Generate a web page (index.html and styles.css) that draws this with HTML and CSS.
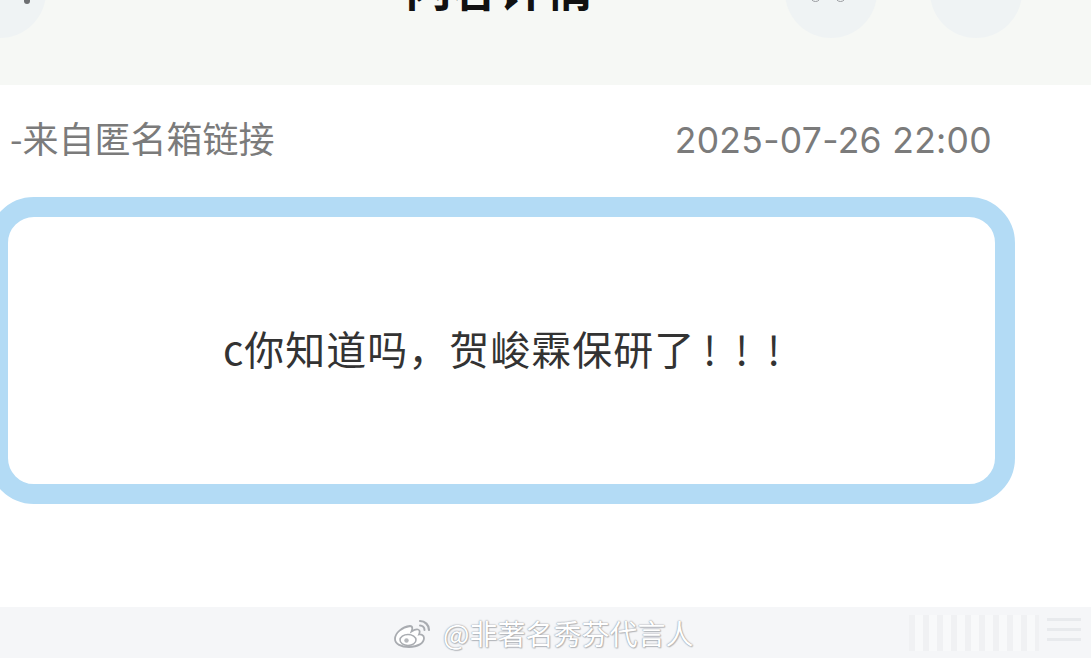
FILE: index.html
```html
<!DOCTYPE html>
<html lang="zh-CN">
<head>
<meta charset="utf-8">
<title>内容详情</title>
<link rel="stylesheet" href="styles.css">
</head>
<body>
<div class="page">
  <header class="header">
    <div class="header-row">
      <div class="circle btn-back"><span class="back-dot"></span></div>
      <h1 class="title">内容详情</h1>
      <div class="circle btn-more">
        <span class="ring"></span><span class="ring"></span>
      </div>
      <div class="circle btn-share"></div>
    </div>
  </header>
  <main class="main">
    <div class="meta">
      <span class="source">-来自匿名箱链接</span>
      <span class="date">2025-07-26 22:00</span>
    </div>
    <div class="message-box">
      <p class="message">c你知道吗，贺峻霖保研了<span class="bang">!!!</span></p>
    </div>
  </main>
  <footer class="footer">
    <div class="watermark">
      <svg class="weibo" width="40" height="30" viewBox="0 0 40 30">
        <path d="M17 8 C9 9 2 15 2 21 C2 26 8 29 16 29 C25 29 31 25 31 20 C31 17 28 16 26 16.5 C27 14 27 12 25 11.5 C23 11 20 12.5 18.5 13.5 C19.5 11 20 8 17 8 Z" fill="#fff" stroke="#a9acb1" stroke-width="1.8"/>
        <ellipse cx="15" cy="22" rx="8" ry="5.5" fill="#fff" stroke="#a9acb1" stroke-width="1.5"/>
        <circle cx="13.5" cy="22.5" r="2.2" fill="#b5b8bc"/>
        <path d="M27 3 C32 3 36 7 36 12" fill="none" stroke="#a9acb1" stroke-width="2.2" stroke-linecap="round"/>
        <path d="M27 7.5 C29.5 7.5 31.5 9.5 31.5 12" fill="none" stroke="#a9acb1" stroke-width="2" stroke-linecap="round"/>
      </svg>
      <span class="wm-text">@非著名秀芬代言人</span>
    </div>
    <div class="blur-bars">
      <span class="bars-v"></span>
      <span class="bars-h"></span>
    </div>
  </footer>
</div>
</body>
</html>
```
FILE: styles.css
```css
html, body {
  margin: 0;
  padding: 0;
}
body {
  background: #ffffff;
  font-family: "Noto Sans CJK SC", "Noto Sans", sans-serif;
}
.page {
  width: 1091px;
  height: 658px;
  overflow: hidden;
  display: flex;
  flex-direction: column;
}
.header {
  height: 85px;
  flex: none;
  background: #f6f8f5;
  overflow: hidden;
}
.header-row {
  display: flex;
  align-items: flex-start;
  margin-top: -54px;
}
.circle {
  width: 92px;
  height: 92px;
  border-radius: 50%;
  background: #eff3f4;
  flex: none;
  position: relative;
}
.btn-back {
  margin-left: -46px;
}
.back-dot {
  position: absolute;
  left: 70px;
  top: 50px;
  width: 6px;
  height: 8px;
  border-radius: 3px;
  background: #6d6f72;
}
.title {
  margin: 16px 0 0 359px;
  font-size: 47px;
  line-height: 47px;
  font-weight: 700;
  color: #111111;
  white-space: nowrap;
}
.btn-more {
  margin-left: 192px;
}
.ring {
  position: absolute;
  top: 45px;
  width: 9px;
  height: 9px;
  border: 1.5px solid #9a9ca0;
  border-radius: 50%;
}
.ring:first-child { left: 25px; }
.ring:last-child { left: 50px; }
.btn-share {
  margin-left: 53px;
}
.main {
  flex: 1;
  padding-top: 33px;
  display: flex;
  flex-direction: column;
}
.meta {
  display: flex;
  justify-content: space-between;
  align-items: baseline;
  padding: 0 99px 0 10px;
  color: #7b7b7b;
}
.source {
  font-size: 36px;
  line-height: 38px;
}
.date {
  font-family: "Inter", "Roboto", sans-serif;
  font-size: 35.5px;
  line-height: 38px;
  letter-spacing: 0.3px;
}
.message-box {
  margin: 37px 0 0 -12px;
  width: 1027px;
  height: 307px;
  box-sizing: border-box;
  border: 20px solid #b3dbf5;
  border-radius: 46px;
  display: flex;
  align-items: center;
  justify-content: center;
}
.message {
  margin: 0 0 6px 0;
  font-size: 40px;
  line-height: 48px;
  letter-spacing: 1px;
  color: #333333;
  white-space: nowrap;
}
.bang {
  letter-spacing: 19px;
  margin-left: 8px;
  margin-right: -19px;
}
.footer {
  height: 51px;
  flex: none;
  background: #f5f6f8;
  display: flex;
  align-items: center;
  justify-content: space-between;
}
.watermark {
  display: flex;
  align-items: center;
  gap: 10px;
  margin-left: 393px;
}
.weibo {
  display: block;
}
.wm-text {
  font-size: 28px;
  line-height: 34px;
  color: #ffffff;
  text-shadow: 0 0 1px #8f9297, 0 0 2px #a9acb1, 1px 1px 1px #bfc2c6;
}
.blur-bars {
  display: flex;
  align-items: center;
  gap: 8px;
  margin-right: 10px;
  height: 36px;
}
.bars-v {
  width: 130px;
  height: 36px;
  background: repeating-linear-gradient(90deg, #f0f1f3 0 6px, #f8f9fa 6px 14px);
}
.bars-h {
  width: 34px;
  height: 30px;
  background: repeating-linear-gradient(180deg, #e8eaed 0 3px, #f5f6f8 3px 10px);
}
```
